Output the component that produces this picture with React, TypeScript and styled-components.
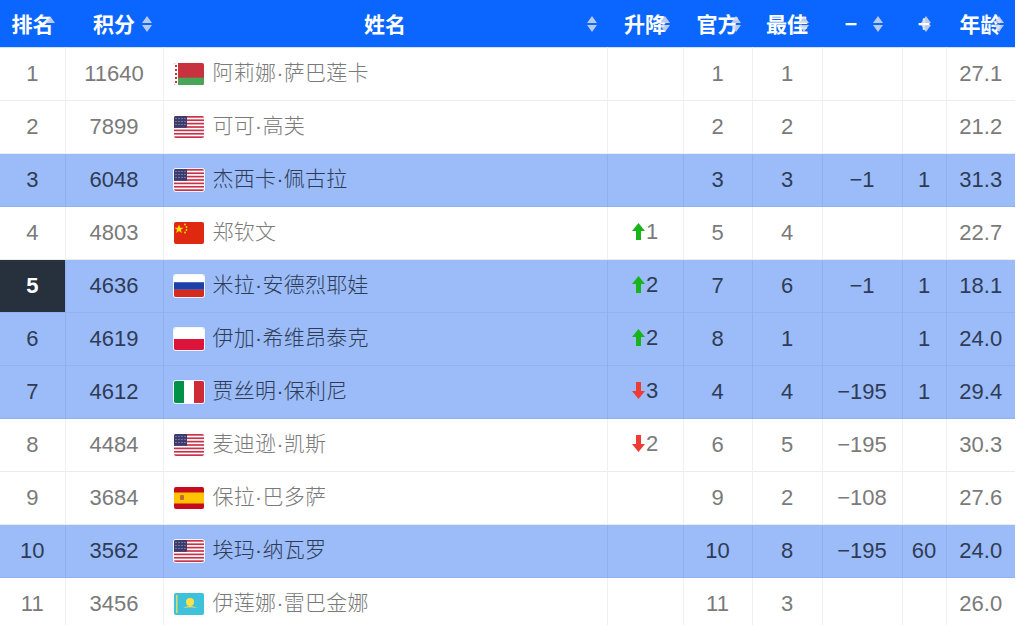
import React from "react";
import styled, { createGlobalStyle } from "styled-components";

const GlobalStyle = createGlobalStyle`
  html, body {
    margin: 0;
    padding: 0;
    background: #ffffff;
  }
  body {
    font-family: "Liberation Sans", "Noto Sans CJK SC", sans-serif;
    overflow: hidden;
  }
`;

const Table = styled.table`
  width: 1015px;
  table-layout: fixed;
  border-collapse: collapse;
`;

const HeadRow = styled.tr`
  height: 47px;
  background: #0a66ff;
  border-bottom: 1px solid #cfe0ff;
`;

const HeadCell = styled.th`
  padding: 0;
  color: #ffffff;
  font-family: "Noto Sans CJK SC", sans-serif;
  font-weight: 700;
  font-size: 21px;
  text-align: center;
  position: relative;
  white-space: nowrap;
`;

const HeadLabel = styled.span<{ $gap?: number }>`
  position: relative;
  display: inline-block;
  line-height: 47px;
  margin-right: ${(p) => p.$gap || 0}px;
`;

const SortWrap = styled.span<{ $right: number }>`
  position: absolute;
  top: 50%;
  right: ${(p) => p.$right}px;
  transform: translateY(-50%);
  display: flex;
  opacity: 0.85;
`;

const Row = styled.tr<{ $hl: boolean }>`
  height: 53px;
  background: ${(p) => (p.$hl ? "#9bbcf9" : "#ffffff")};
  color: ${(p) => (p.$hl ? "#2f3b55" : "#7a7a7a")};
  border-bottom: 1px solid ${(p) => (p.$hl ? "#8fb2f3" : "#ececec")};
`;

const Cell = styled.td<{ $hl?: boolean }>`
  padding: 0;
  font-size: 22px;
  text-align: center;
  white-space: nowrap;
  border-left: 1px solid ${(p) => (p.$hl ? "rgba(60,90,150,0.12)" : "#f0f0f0")};
  &:first-child {
    border-left: none;
  }
`;

const RankCell = styled(Cell)<{ $dark?: boolean }>`
  background: ${(p) => (p.$dark ? "#27313e" : "transparent")};
  color: ${(p) => (p.$dark ? "#ffffff" : "inherit")};
  font-weight: ${(p) => (p.$dark ? 700 : 400)};
`;

const NameCell = styled(Cell)`
  text-align: left;
`;

const NameWrap = styled.div`
  display: flex;
  align-items: center;
  gap: 9px;
  padding-left: 10px;
  font-family: "Liberation Sans", "Noto Sans CJK SC", sans-serif;
  font-weight: 300;
  font-size: 21px;
`;

const NameText = styled.span`
  line-height: 1;
  margin-top: -3px;
  letter-spacing: 0.3px;
`;

const FlagBox = styled.span`
  display: inline-flex;
  width: 30px;
  height: 22px;
  border-radius: 2px;
  overflow: hidden;
  box-shadow: 0 0 0 1px rgba(255, 255, 255, 0.9), 0 0 2px rgba(0, 0, 0, 0.35);
`;

const Change = styled.span`
  display: inline-flex;
  align-items: center;
  gap: 1px;
`;

const SortIcon = ({ onlyUp }: { onlyUp?: boolean }) => (
  <svg width="10" height="18" viewBox="0 0 10 18">
    <polygon points="0,8 5,1 10,8" fill="#d4dbe8" />
    {!onlyUp && <polygon points="0,10 5,17 10,10" fill="#d4dbe8" />}
  </svg>
);

const Arrow = ({ up }: { up: boolean }) =>
  up ? (
    <svg width="13" height="19" viewBox="0 0 13 19">
      <polygon points="0,9 6.5,1 13,9" fill="#19b31c" />
      <rect x="4" y="8" width="5" height="10" fill="#19b31c" />
    </svg>
  ) : (
    <svg width="13" height="19" viewBox="0 0 13 19">
      <rect x="4" y="1" width="5" height="10" fill="#ef3b36" />
      <polygon points="0,10 6.5,18 13,10" fill="#ef3b36" />
    </svg>
  );

const Flag = ({ code }: { code: string }) => {
  let art: React.ReactNode = null;
  switch (code) {
    case "BY":
      art = (
        <>
          <rect width="30" height="22" fill="#c8313e" />
          <rect y="14.7" width="30" height="7.3" fill="#4aa657" />
          <rect width="4" height="22" fill="#ffffff" />
          {[2, 6, 10, 14, 18].map((y) => (
            <rect key={y} x="1" y={y} width="2" height="2" fill="#c8313e" />
          ))}
        </>
      );
      break;
    case "US":
      art = (
        <>
          <rect width="30" height="22" fill="#ffffff" />
          {Array.from({ length: 7 }).map((_, i) => (
            <rect key={i} y={i * 3.385} width="30" height="1.69" fill="#c9334a" />
          ))}
          <rect width="13" height="11.8" fill="#3c3b6e" />
          {[2, 5, 8, 11].map((x) =>
            [2, 5, 8].map((y) => (
              <circle key={x + "-" + y} cx={x} cy={y + 0.5} r="0.5" fill="#cfd3e6" />
            ))
          )}
        </>
      );
      break;
    case "CN":
      art = (
        <>
          <rect width="30" height="22" fill="#de2910" />
          <polygon points="5,2.5 6.2,5.8 9.6,5.8 6.9,7.8 7.9,11 5,9 2.1,11 3.1,7.8 0.4,5.8 3.8,5.8" fill="#ffde00" />
          <circle cx="11" cy="2.5" r="0.9" fill="#ffde00" />
          <circle cx="12.5" cy="5" r="0.9" fill="#ffde00" />
          <circle cx="12.5" cy="8" r="0.9" fill="#ffde00" />
          <circle cx="11" cy="10.5" r="0.9" fill="#ffde00" />
        </>
      );
      break;
    case "RU":
      art = (
        <>
          <rect width="30" height="7.4" fill="#ffffff" />
          <rect y="7.3" width="30" height="7.4" fill="#1c3fa8" />
          <rect y="14.7" width="30" height="7.3" fill="#d52b1e" />
        </>
      );
      break;
    case "PL":
      art = (
        <>
          <rect width="30" height="11" fill="#ffffff" />
          <rect y="11" width="30" height="11" fill="#dc143c" />
        </>
      );
      break;
    case "IT":
      art = (
        <>
          <rect width="10" height="22" fill="#009246" />
          <rect x="10" width="10" height="22" fill="#ffffff" />
          <rect x="20" width="10" height="22" fill="#ce2b37" />
        </>
      );
      break;
    case "ES":
      art = (
        <>
          <rect width="30" height="22" fill="#c60b1e" />
          <rect y="5.5" width="30" height="11" fill="#ffc400" />
          <rect x="6" y="8" width="4" height="5" rx="1" fill="#c8643a" />
        </>
      );
      break;
    case "KZ":
      art = (
        <>
          <rect width="30" height="22" fill="#3fc1dc" />
          <circle cx="16" cy="9" r="4" fill="#ffe14a" />
          <path d="M9 15 Q16 11 23 15 Q16 13.5 9 15 Z" fill="#ffe14a" />
          <rect x="2" y="2" width="1.6" height="18" fill="#ffe14a" opacity="0.8" />
        </>
      );
      break;
  }
  return (
    <FlagBox>
      <svg width="30" height="22" viewBox="0 0 30 22">
        {art}
      </svg>
    </FlagBox>
  );
};

type Player = {
  rank: number;
  points: number;
  flag: string;
  name: string;
  move?: number;
  official: number;
  best: number;
  minus?: string;
  plus?: string;
  age: string;
  hl?: boolean;
  dark?: boolean;
};

const players: Player[] = [
  { rank: 1, points: 11640, flag: "BY", name: "阿莉娜·萨巴莲卡", official: 1, best: 1, age: "27.1" },
  { rank: 2, points: 7899, flag: "US", name: "可可·高芙", official: 2, best: 2, age: "21.2" },
  { rank: 3, points: 6048, flag: "US", name: "杰西卡·佩古拉", official: 3, best: 3, minus: "−1", plus: "1", age: "31.3", hl: true },
  { rank: 4, points: 4803, flag: "CN", name: "郑钦文", move: 1, official: 5, best: 4, age: "22.7" },
  { rank: 5, points: 4636, flag: "RU", name: "米拉·安德烈耶娃", move: 2, official: 7, best: 6, minus: "−1", plus: "1", age: "18.1", hl: true, dark: true },
  { rank: 6, points: 4619, flag: "PL", name: "伊加·希维昂泰克", move: 2, official: 8, best: 1, plus: "1", age: "24.0", hl: true },
  { rank: 7, points: 4612, flag: "IT", name: "贾丝明·保利尼", move: -3, official: 4, best: 4, minus: "−195", plus: "1", age: "29.4", hl: true },
  { rank: 8, points: 4484, flag: "US", name: "麦迪逊·凯斯", move: -2, official: 6, best: 5, minus: "−195", age: "30.3" },
  { rank: 9, points: 3684, flag: "ES", name: "保拉·巴多萨", official: 9, best: 2, minus: "−108", age: "27.6" },
  { rank: 10, points: 3562, flag: "US", name: "埃玛·纳瓦罗", official: 10, best: 8, minus: "−195", plus: "60", age: "24.0", hl: true },
  { rank: 11, points: 3456, flag: "KZ", name: "伊莲娜·雷巴金娜", official: 11, best: 3, age: "26.0" },
];

const colWidths = [65, 98, 444, 76, 69, 70, 80, 44, 69];

export default function App() {
  return (
    <>
      <GlobalStyle />
      <Table>
        <colgroup>
          {colWidths.map((w, i) => (
            <col key={i} style={{ width: w }} />
          ))}
        </colgroup>
        <thead>
          <HeadRow>
            <HeadCell>
              <HeadLabel>
                排名
                <SortWrap $right={-1}>
                  <SortIcon onlyUp />
                </SortWrap>
              </HeadLabel>
            </HeadCell>
            <HeadCell>
              <HeadLabel>
                积分
                <SortWrap $right={-17}>
                  <SortIcon />
                </SortWrap>
              </HeadLabel>
            </HeadCell>
            <HeadCell>
              <HeadLabel>姓名</HeadLabel>
              <SortWrap $right={10}>
                <SortIcon />
              </SortWrap>
            </HeadCell>
            <HeadCell>
              <HeadLabel>
                升降
                <SortWrap $right={-4}>
                  <SortIcon />
                </SortWrap>
              </HeadLabel>
            </HeadCell>
            <HeadCell>
              <HeadLabel>
                官方
                <SortWrap $right={-2}>
                  <SortIcon />
                </SortWrap>
              </HeadLabel>
            </HeadCell>
            <HeadCell>
              <HeadLabel>
                最佳
                <SortWrap $right={-1}>
                  <SortIcon />
                </SortWrap>
              </HeadLabel>
            </HeadCell>
            <HeadCell>
              <HeadLabel $gap={22}>
                −
                <SortWrap $right={-26}>
                  <SortIcon />
                </SortWrap>
              </HeadLabel>
            </HeadCell>
            <HeadCell>
              <HeadLabel>
                +
                <SortWrap $right={-1}>
                  <SortIcon />
                </SortWrap>
              </HeadLabel>
            </HeadCell>
            <HeadCell>
              <HeadLabel>
                年龄
                <SortWrap $right={-2}>
                  <SortIcon />
                </SortWrap>
              </HeadLabel>
            </HeadCell>
          </HeadRow>
        </thead>
        <tbody>
          {players.map((p) => (
            <Row key={p.rank} $hl={!!p.hl}>
              <RankCell $hl={p.hl} $dark={p.dark}>
                {p.rank}
              </RankCell>
              <Cell $hl={p.hl}>{p.points}</Cell>
              <NameCell $hl={p.hl}>
                <NameWrap>
                  <Flag code={p.flag} />
                  <NameText>{p.name}</NameText>
                </NameWrap>
              </NameCell>
              <Cell $hl={p.hl}>
                {p.move ? (
                  <Change>
                    <Arrow up={p.move > 0} />
                    {Math.abs(p.move)}
                  </Change>
                ) : null}
              </Cell>
              <Cell $hl={p.hl}>{p.official}</Cell>
              <Cell $hl={p.hl}>{p.best}</Cell>
              <Cell $hl={p.hl}>{p.minus}</Cell>
              <Cell $hl={p.hl}>{p.plus}</Cell>
              <Cell $hl={p.hl}>{p.age}</Cell>
            </Row>
          ))}
        </tbody>
      </Table>
    </>
  );
}
